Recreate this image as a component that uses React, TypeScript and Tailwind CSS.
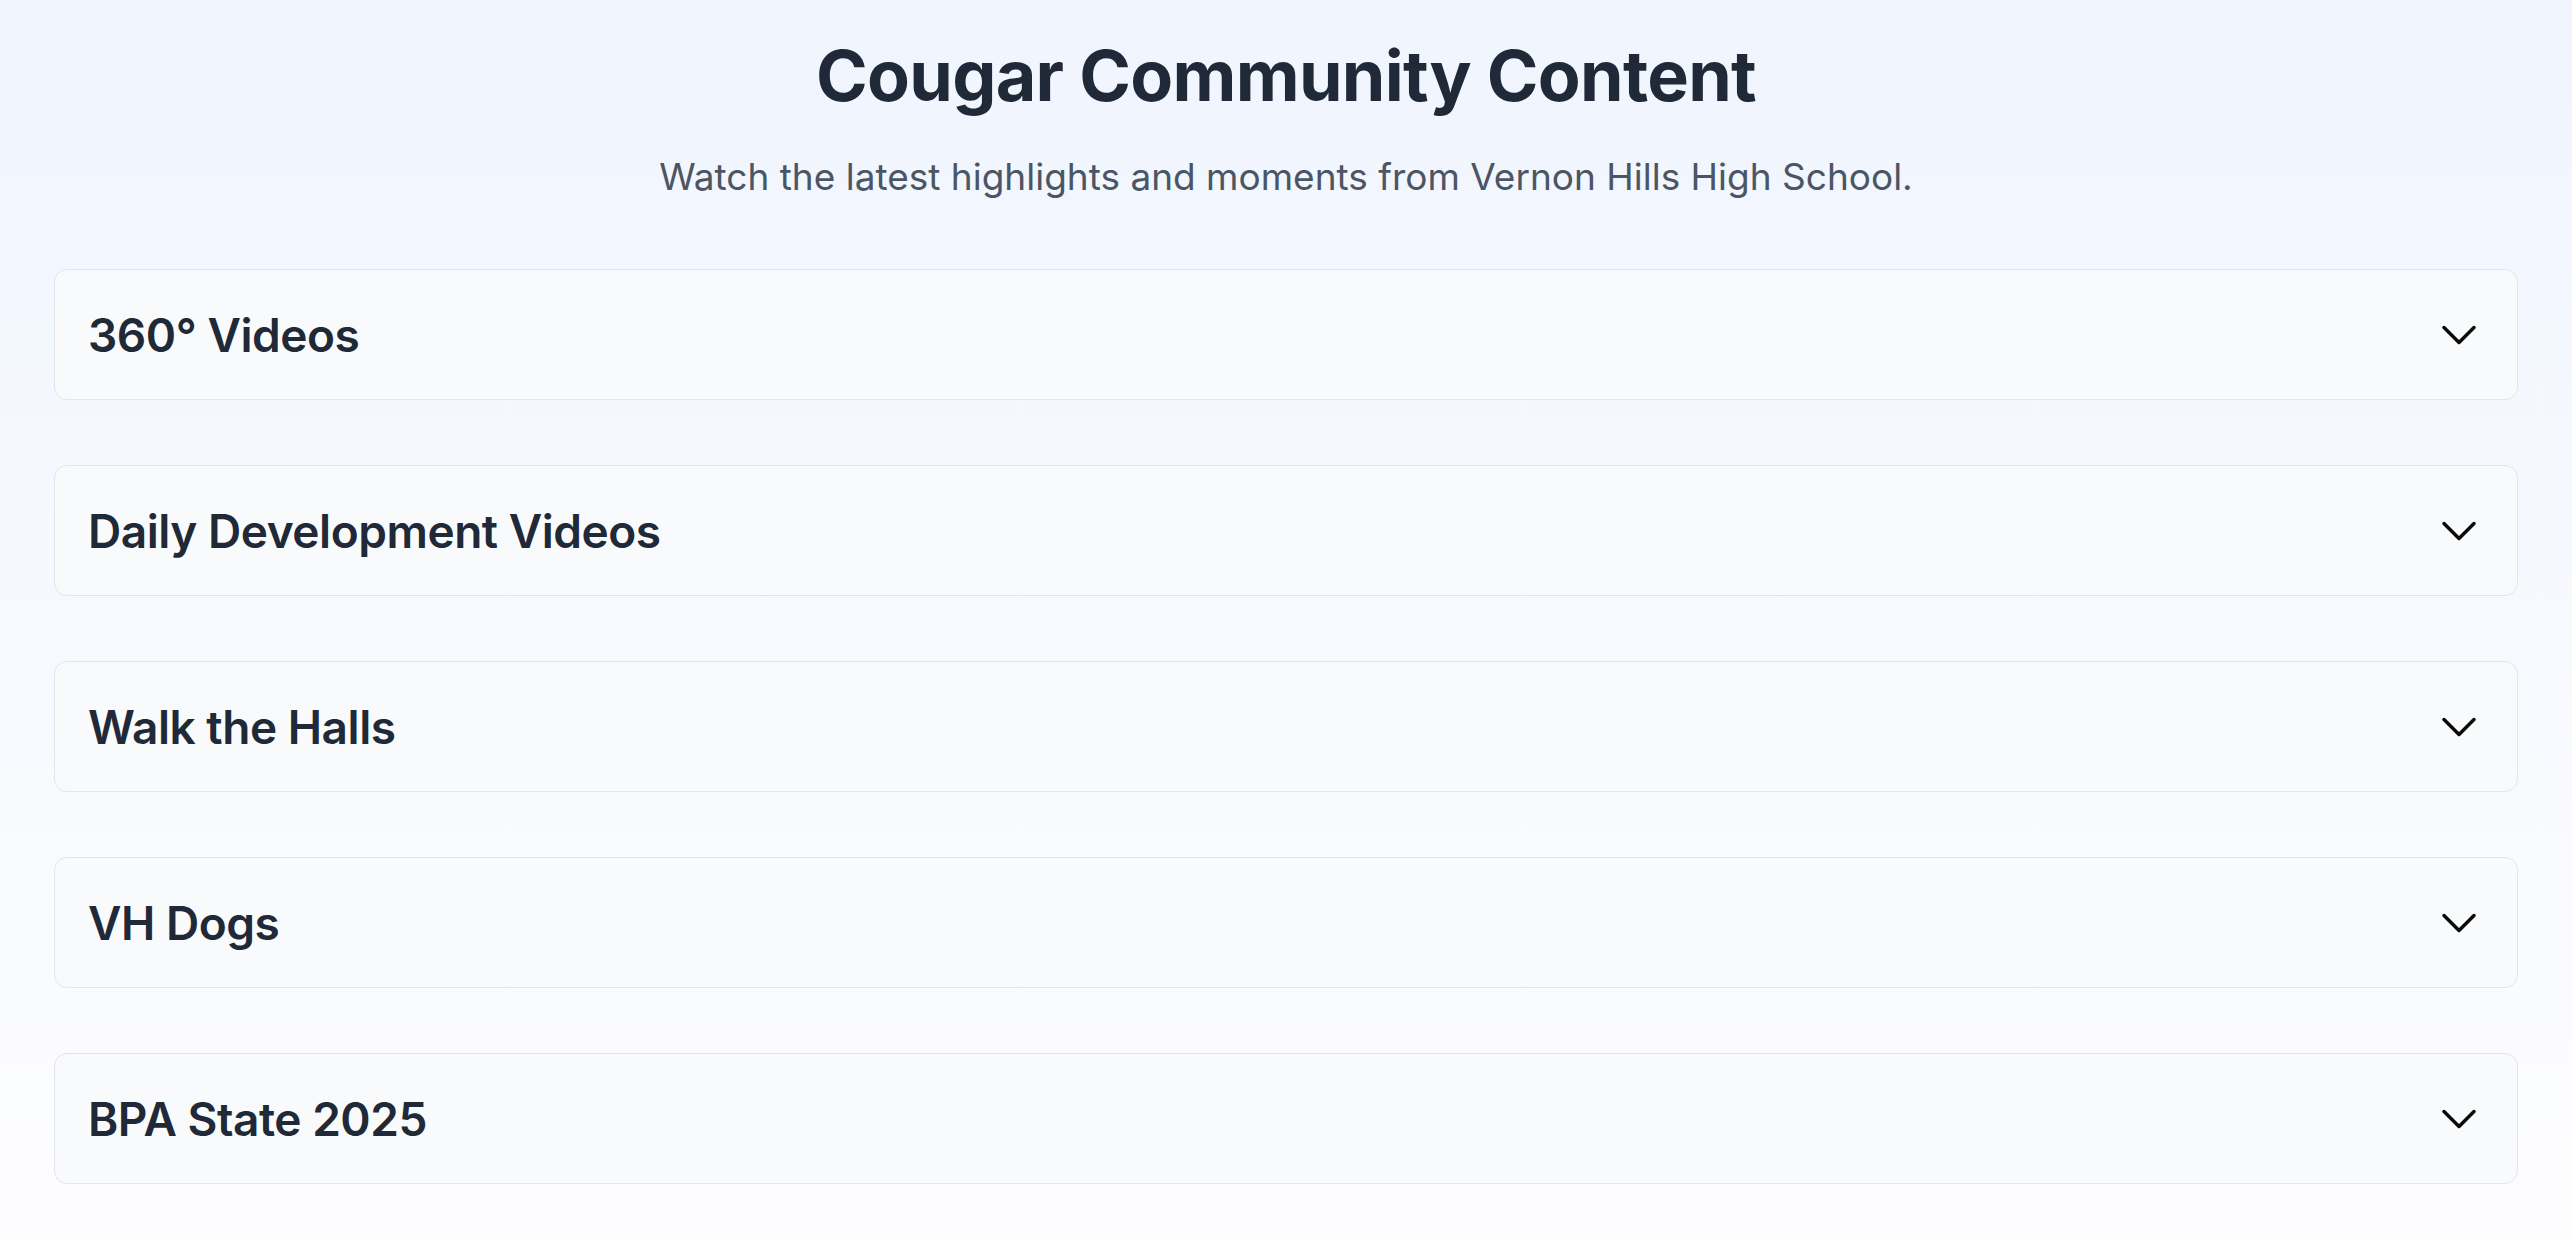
import React from "react";

const items = [
  "360° Videos",
  "Daily Development Videos",
  "Walk the Halls",
  "VH Dogs",
  "BPA State 2025",
];

function Chevron() {
  return (
    <svg
      width="48"
      height="48"
      viewBox="0 0 24 24"
      fill="none"
      stroke="#0a0a0a"
      strokeWidth={1.75}
      strokeLinecap="round"
      strokeLinejoin="round"
    >
      <path d="m19.5 8.25-7.5 7.5-7.5-7.5" />
    </svg>
  );
}

export default function App() {
  return (
    <div
      className="min-h-[1240px] w-full bg-gradient-to-b from-[#f0f5fe] to-[#fdfdff] px-[54px] pb-[40px]"
      style={{ fontFamily: "Inter, 'Noto Sans', sans-serif" }}
    >
      <h1 className="pt-[41px] text-center text-[70px] font-bold leading-none tracking-[-0.01em] text-[#1f2937]">
        Cougar Community Content
      </h1>
      <p className="mt-[47px] text-center text-[37px] leading-none text-[#4b5563]">
        Watch the latest highlights and moments from Vernon Hills High School.
      </p>
      <div className="mt-[74px] flex flex-col gap-[65px]">
        {items.map((t) => (
          <div
            key={t}
            className="flex h-[131px] items-center justify-between rounded-[13px] border border-[#e2e5ea] bg-[#f9fafb] pl-[33px] pr-[34px]"
          >
            <span className="text-[46px] font-semibold leading-none tracking-[-0.01em] text-[#1f2937]">
              {t}
            </span>
            <Chevron />
          </div>
        ))}
      </div>
    </div>
  );
}
